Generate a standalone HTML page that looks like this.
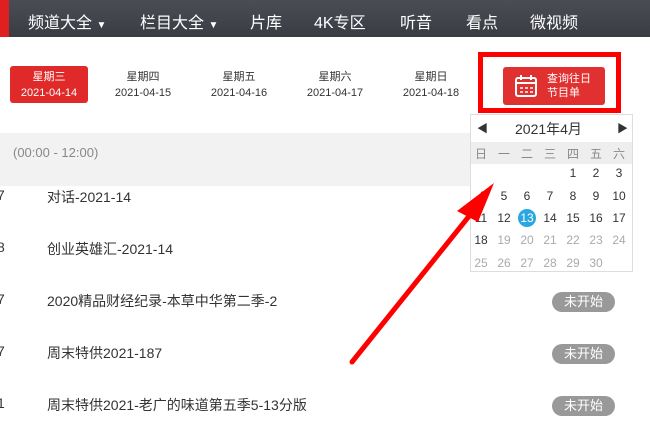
<!DOCTYPE html>
<html><head><meta charset="utf-8"><style>
body{margin:0;width:650px;height:433px;overflow:hidden;background:#fff;font-family:"Liberation Sans","Noto Sans CJK SC",sans-serif;position:relative}
.a{position:absolute;white-space:nowrap}
.nav{position:absolute;left:0;top:0;width:650px;height:37px;background:linear-gradient(#4a4d55,#3a3c43)}
.nav span{position:absolute;top:9px;color:#fff;font-size:16px}
.tab{position:absolute;top:66px;width:78px;height:37px;text-align:center;font-size:11px;color:#333;line-height:16px;padding-top:3px;box-sizing:border-box}
.cal{position:absolute;left:470px;top:114px;width:163px;height:158px;border:1px solid #ddd;background:#fff;box-sizing:border-box}
.cell{position:absolute;width:22px;text-align:center;font-size:12px}
.row{position:absolute;left:47px;font-size:14px;color:#333}
.num{position:absolute;left:-3px;font-size:14px;color:#333}
.b{position:absolute;left:552px;width:63px;height:20px;border-radius:10px;background:#999;color:#fff;font-size:13px;text-align:center;line-height:20px}
</style></head><body>
<div class="nav"><div style="position:absolute;left:0;top:0;width:9px;height:37px;background:#e02020"></div>
<span style="left:28px">频道大全 <small style="font-size:10px">▼</small></span>
<span style="left:140px">栏目大全 <small style="font-size:10px">▼</small></span>
<span style="left:250px">片库</span><span style="left:314px">4K专区</span><span style="left:400px">听音</span><span style="left:466px">看点</span><span style="left:530px">微视频</span></div>

<div class="tab" style="left:10px;background:#e02a2a;color:#fff;border-radius:3px">星期三<br>2021-04-14</div>
<div class="tab" style="left:104px">星期四<br>2021-04-15</div>
<div class="tab" style="left:200px">星期五<br>2021-04-16</div>
<div class="tab" style="left:296px">星期六<br>2021-04-17</div>
<div class="tab" style="left:392px">星期日<br>2021-04-18</div>

<div class="a" style="left:478px;top:52px;width:143px;height:61px;border:5px solid #f00;box-sizing:border-box"></div>
<div class="a" style="left:503px;top:67px;width:102px;height:38px;background:#e03030;border-radius:3px;color:#fff;font-size:11px;line-height:14px">
<svg style="position:absolute;left:11px;top:7px" width="24" height="24" viewBox="0 0 24 24" fill="none" stroke="#fff" stroke-width="2"><rect x="2" y="4" width="20" height="18" rx="2"/><line x1="2" y1="9" x2="22" y2="9"/><line x1="7" y1="1" x2="7" y2="6"/><line x1="17" y1="1" x2="17" y2="6"/><path d="M6 14h3M11 14h3M16 14h3M6 18h3M11 18h3M16 18h3" stroke-width="1.5"/></svg>
<div class="a" style="left:44px;top:5px">查询往日<br>节目单</div></div>

<div class="a" style="left:0;top:133px;width:470px;height:53px;background:#f2f2f2"></div>
<div class="a" style="left:13px;top:145px;font-size:13px;color:#888">(00:00 - 12:00)</div>

<div class="num" style="top:187px">7</div><div class="row" style="top:187px">对话-2021-14</div>
<div class="num" style="top:239px">8</div><div class="row" style="top:239px">创业英雄汇-2021-14</div>
<div class="num" style="top:291px">7</div><div class="row" style="top:291px">2020精品财经纪录-本草中华第二季-2</div>
<div class="num" style="top:343px">7</div><div class="row" style="top:343px">周末特供2021-187</div>
<div class="num" style="top:395px">1</div><div class="row" style="top:395px">周末特供2021-老广的味道第五季5-13分版</div>
<div class="b" style="top:292px">未开始</div>
<div class="b" style="top:344px">未开始</div>
<div class="b" style="top:396px">未开始</div>

<div class="cal">
<div class="a" style="left:6px;top:5px;font-size:11px;color:#333">◀</div>
<div class="a" style="left:44px;top:4px;font-size:14px;color:#333">2021年4月</div>
<div class="a" style="left:146px;top:5px;font-size:11px;color:#333">▶</div>
<div class="a" style="left:0;top:27px;width:161px;height:22px;background:#eee"></div>
</div>
<div id="g"></div>
<script>
var cx=[481,504,527,550,573,596,619],h='',w=['日','一','二','三','四','五','六'];
for(var i=0;i<7;i++)h+='<div class="a cell" style="left:'+(cx[i]-11)+'px;top:145px;color:#888">'+w[i]+'</div>';
var ys=[166,189,211,233,256];
for(var d=1;d<=30;d++){var p=d+3,r=Math.floor(p/7),c=p%7;var col=(d>=19)?'#aaa':'#333';
var st='left:'+(cx[c]-11)+'px;top:'+ys[r]+'px;color:'+col;
if(d==13)st+=';color:#fff;background:#2aa7df;border-radius:50%;height:18px;line-height:18px;width:18px;margin-left:2px;margin-top:-2px';
h+='<div class="a cell" style="'+st+'">'+d+'</div>';}
document.getElementById('g').innerHTML=h;
</script>
<svg class="a" style="left:0;top:0" width="650" height="433"><line x1="352" y1="362" x2="474" y2="210" stroke="#f00" stroke-width="5" stroke-linecap="round"/><polygon points="494,183 457,211 478,222" fill="#f00"/></svg>
</body></html>
